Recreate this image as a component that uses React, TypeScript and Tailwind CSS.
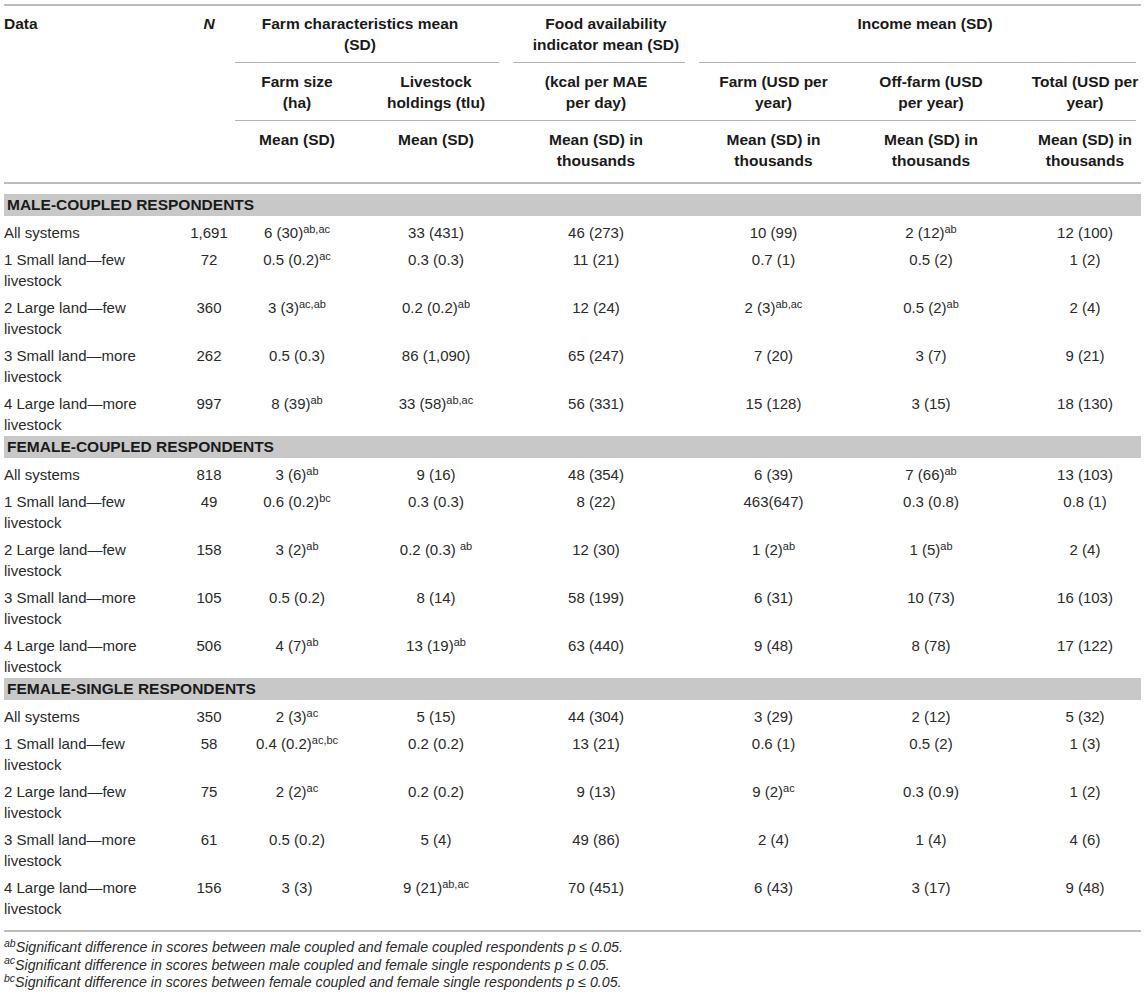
type Cell = [string, string?];

type Row = {
  label: string;
  n: string;
  cells: Cell[];
};

type Section = {
  title: string;
  rows: Row[];
};

const COLS =
  "grid grid-cols-[186px_38px_138px_140px_186px_163px_152px_134px]";

const SECTIONS: Section[] = [
  {
    title: "MALE-COUPLED RESPONDENTS",
    rows: [
      { label: "All systems", n: "1,691", cells: [["6 (30)", "ab,ac"], ["33 (431)"], ["46 (273)"], ["10 (99)"], ["2 (12)", "ab"], ["12 (100)"]] },
      { label: "1 Small land—few livestock", n: "72", cells: [["0.5 (0.2)", "ac"], ["0.3 (0.3)"], ["11 (21)"], ["0.7 (1)"], ["0.5 (2)"], ["1 (2)"]] },
      { label: "2 Large land—few livestock", n: "360", cells: [["3 (3)", "ac,ab"], ["0.2 (0.2)", "ab"], ["12 (24)"], ["2 (3)", "ab,ac"], ["0.5 (2)", "ab"], ["2 (4)"]] },
      { label: "3 Small land—more livestock", n: "262", cells: [["0.5 (0.3)"], ["86 (1,090)"], ["65 (247)"], ["7 (20)"], ["3 (7)"], ["9 (21)"]] },
      { label: "4 Large land—more livestock", n: "997", cells: [["8 (39)", "ab"], ["33 (58)", "ab,ac"], ["56 (331)"], ["15 (128)"], ["3 (15)"], ["18 (130)"]] },
    ],
  },
  {
    title: "FEMALE-COUPLED RESPONDENTS",
    rows: [
      { label: "All systems", n: "818", cells: [["3 (6)", "ab"], ["9 (16)"], ["48 (354)"], ["6 (39)"], ["7 (66)", "ab"], ["13 (103)"]] },
      { label: "1 Small land—few livestock", n: "49", cells: [["0.6 (0.2)", "bc"], ["0.3 (0.3)"], ["8 (22)"], ["463(647)"], ["0.3 (0.8)"], ["0.8 (1)"]] },
      { label: "2 Large land—few livestock", n: "158", cells: [["3 (2)", "ab"], ["0.2 (0.3) ", "ab"], ["12 (30)"], ["1 (2)", "ab"], ["1 (5)", "ab"], ["2 (4)"]] },
      { label: "3 Small land—more livestock", n: "105", cells: [["0.5 (0.2)"], ["8 (14)"], ["58 (199)"], ["6 (31)"], ["10 (73)"], ["16 (103)"]] },
      { label: "4 Large land—more livestock", n: "506", cells: [["4 (7)", "ab"], ["13 (19)", "ab"], ["63 (440)"], ["9 (48)"], ["8 (78)"], ["17 (122)"]] },
    ],
  },
  {
    title: "FEMALE-SINGLE RESPONDENTS",
    rows: [
      { label: "All systems", n: "350", cells: [["2 (3)", "ac"], ["5 (15)"], ["44 (304)"], ["3 (29)"], ["2 (12)"], ["5 (32)"]] },
      { label: "1 Small land—few livestock", n: "58", cells: [["0.4 (0.2)", "ac,bc"], ["0.2 (0.2)"], ["13 (21)"], ["0.6 (1)"], ["0.5 (2)"], ["1 (3)"]] },
      { label: "2 Large land—few livestock", n: "75", cells: [["2 (2)", "ac"], ["0.2 (0.2)"], ["9 (13)"], ["9 (2)", "ac"], ["0.3 (0.9)"], ["1 (2)"]] },
      { label: "3 Small land—more livestock", n: "61", cells: [["0.5 (0.2)"], ["5 (4)"], ["49 (86)"], ["2 (4)"], ["1 (4)"], ["4 (6)"]] },
      { label: "4 Large land—more livestock", n: "156", cells: [["3 (3)"], ["9 (21)", "ab,ac"], ["70 (451)"], ["6 (43)"], ["3 (17)"], ["9 (48)"]] },
    ],
  },
];

// per-column horizontal padding so the centres land where the reference has them
const CELL_PAD = ["", "", "pr-[6px]", "", "", "pl-[22px]"];

const FOOTNOTES: Cell[] = [
  ["ab", "Significant difference in scores between male coupled and female coupled respondents p ≤ 0.05."],
  ["ac", "Significant difference in scores between male coupled and female single respondents p ≤ 0.05."],
  ["bc", "Significant difference in scores between female coupled and female single respondents p ≤ 0.05."],
];

function Value({ cell }: { cell: Cell }) {
  return (
    <>
      {cell[0]}
      {cell[1] && <sup className="text-[11px]">{cell[1]}</sup>}
    </>
  );
}

function HeaderText({ children, className = "" }: { children: React.ReactNode; className?: string }) {
  return <div className={`mx-auto text-center ${className}`}>{children}</div>;
}

function TableHeader() {
  return (
    <div className={`${COLS} border-t-2 border-b-2 border-[#bcbcbc] font-bold text-[15.5px] leading-[21px] text-[#1a1a1a]`}>
      <div className="row-span-3 pt-[7px]">Data</div>
      <div className="row-span-3 pt-[7px] text-center italic">N</div>

      {/* group headings, each underlined by its own rule */}
      <div className="col-span-2 flex h-[57px] flex-col justify-between px-[7px] pt-[7px]">
        <div className="pr-[14px]">
          <HeaderText className="max-w-[215px]">Farm characteristics mean (SD)</HeaderText>
        </div>
        <div className="h-px bg-[#b3b3b3]" />
      </div>
      <div className="flex h-[57px] flex-col justify-between px-[7px] pt-[7px]">
        <div className="pl-[14px]">
          <HeaderText className="max-w-[170px]">Food availability indicator mean (SD)</HeaderText>
        </div>
        <div className="h-px bg-[#b3b3b3]" />
      </div>
      <div className="col-span-3 flex h-[57px] flex-col justify-between pl-[7px] pr-[5px] pt-[7px]">
        <div className="pl-[15px]">
          <HeaderText>Income mean (SD)</HeaderText>
        </div>
        <div className="h-px bg-[#b3b3b3]" />
      </div>

      {/* units */}
      <div className="pt-[8px] pb-[7px]">
        <HeaderText className="max-w-[92px]">Farm size (ha)</HeaderText>
      </div>
      <div className="pt-[8px] pb-[7px]">
        <HeaderText className="max-w-[120px]">Livestock holdings (tlu)</HeaderText>
      </div>
      <div className="pt-[8px] pb-[7px] pr-[6px]">
        <HeaderText className="max-w-[115px]">(kcal per MAE per day)</HeaderText>
      </div>
      <div className="pt-[8px] pb-[7px]">
        <HeaderText className="max-w-[130px]">Farm (USD per year)</HeaderText>
      </div>
      <div className="pt-[8px] pb-[7px]">
        <HeaderText className="max-w-[118px]">Off-farm (USD per year)</HeaderText>
      </div>
      <div className="pt-[8px] pb-[7px] pl-[22px]">
        <HeaderText className="max-w-[125px]">Total (USD per year)</HeaderText>
      </div>

      <div className="col-span-6 col-start-3 ml-[7px] mr-[5px] h-px bg-[#b3b3b3]" />

      {/* statistic */}
      <div className="col-start-3 pt-[8px] pb-[11px]">
        <HeaderText>Mean (SD)</HeaderText>
      </div>
      <div className="pt-[8px] pb-[11px]">
        <HeaderText>Mean (SD)</HeaderText>
      </div>
      <div className="pt-[8px] pb-[11px] pr-[6px]">
        <HeaderText className="max-w-[115px]">Mean (SD) in thousands</HeaderText>
      </div>
      <div className="pt-[8px] pb-[11px]">
        <HeaderText className="max-w-[130px]">Mean (SD) in thousands</HeaderText>
      </div>
      <div className="pt-[8px] pb-[11px]">
        <HeaderText className="max-w-[118px]">Mean (SD) in thousands</HeaderText>
      </div>
      <div className="pt-[8px] pb-[11px] pl-[22px]">
        <HeaderText className="max-w-[125px]">Mean (SD) in thousands</HeaderText>
      </div>
    </div>
  );
}

function SectionBlock({ section }: { section: Section }) {
  return (
    <div>
      <div className="h-[22px] bg-[#c8c8c9] pl-[3px] text-[15.5px] font-bold leading-[22px] text-[#1a1a1a]">
        {section.title}
      </div>
      {section.rows.map((row, i) => (
        <div
          key={row.label}
          className={`${COLS} ${i === 0 ? "h-[28px] pt-[6px]" : "h-[48px] pt-[5px]"} text-[15px] leading-[21px] text-[#2a2a2a]`}
        >
          <div className="w-[150px]">{row.label}</div>
          <div className="text-center">{row.n}</div>
          {row.cells.map((cell, j) => (
            <div key={j} className={`text-center whitespace-nowrap ${CELL_PAD[j]}`}>
              <Value cell={cell} />
            </div>
          ))}
        </div>
      ))}
    </div>
  );
}

export default function App() {
  return (
    <div className="min-h-screen bg-white pl-[4px] pt-[4px] font-['Liberation_Sans',Arial,sans-serif]">
      <div className="w-[1137px]">
        <TableHeader />
        <div className="pt-[10px] pb-[10px] border-b-2 border-[#bcbcbc]">
          {SECTIONS.map((s) => (
            <SectionBlock key={s.title} section={s} />
          ))}
        </div>
        <div className="pt-[7px] text-[14.2px] italic leading-[17.5px] text-[#2a2a2a]">
          {FOOTNOTES.map(([sup, text]) => (
            <div key={sup}>
              <sup className="text-[10.5px]">{sup}</sup>
              {text}
            </div>
          ))}
        </div>
      </div>
    </div>
  );
}
